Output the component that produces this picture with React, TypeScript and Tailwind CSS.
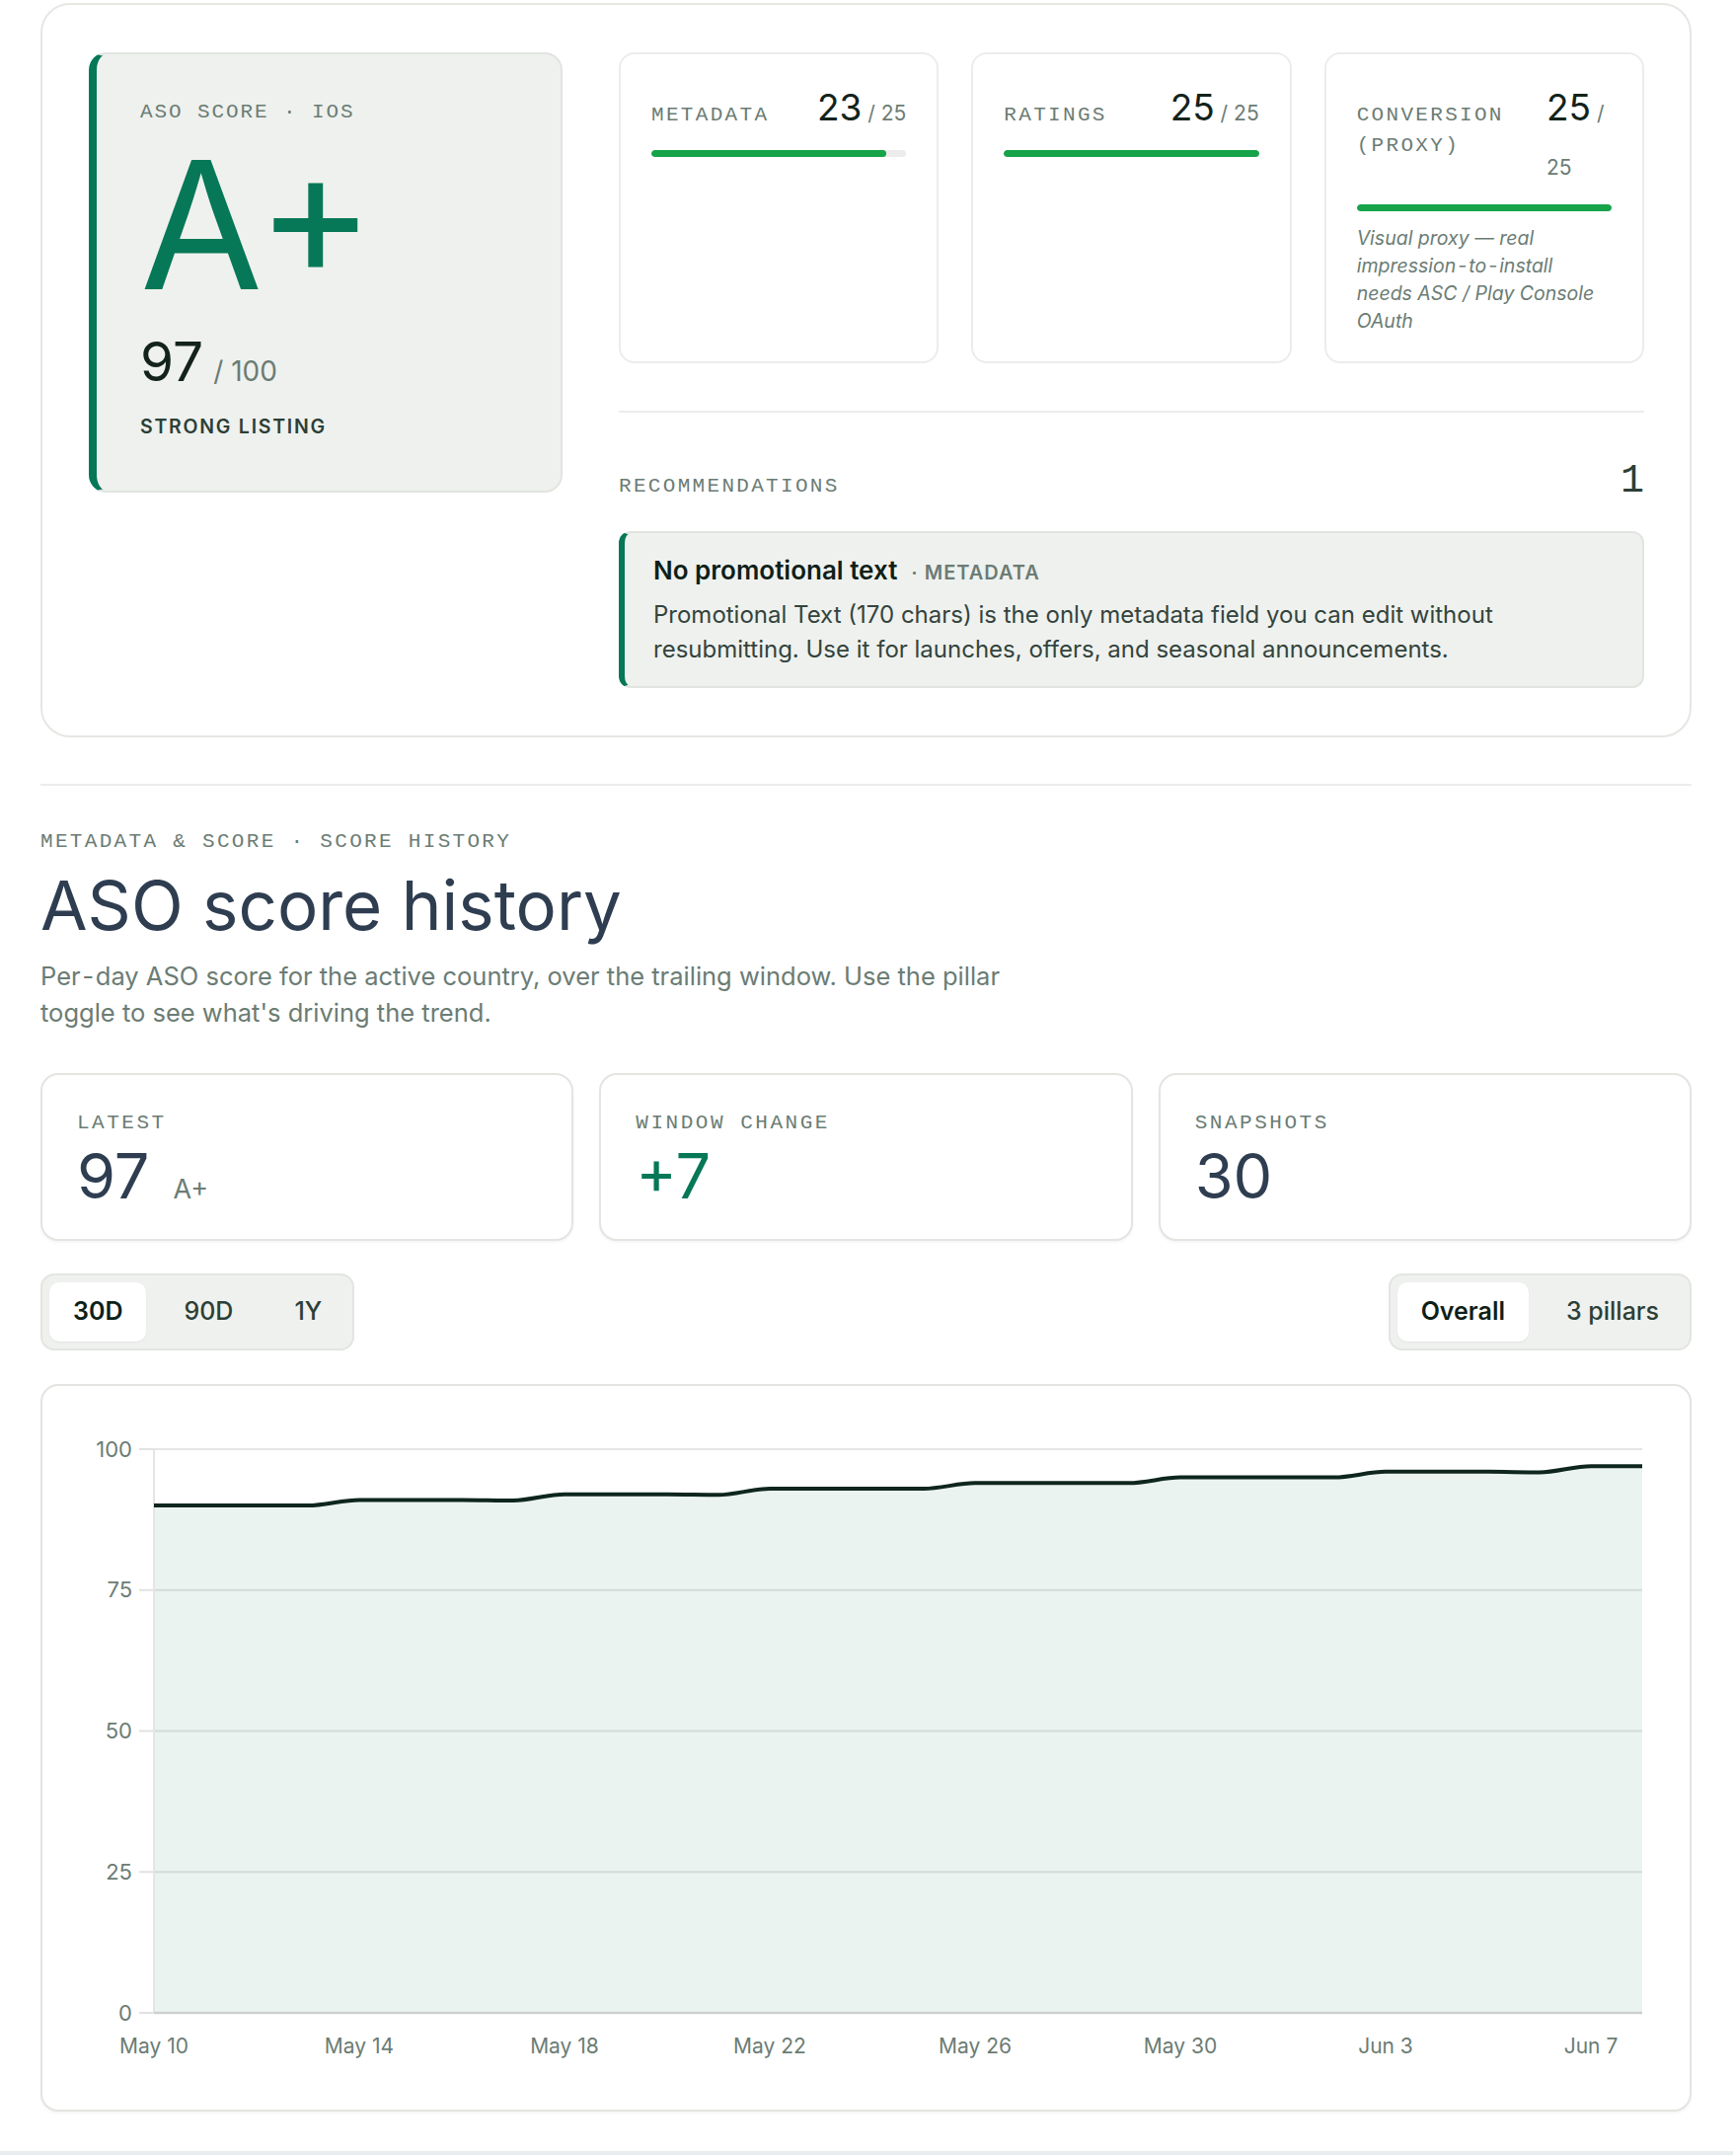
import React from 'react'

const MONO =
  "font-['Courier_New','Courier','Nimbus_Mono_PS','Nimbus_Mono_L','FreeMono','TeX_Gyre_Cursor','Liberation_Mono',monospace]"

const scores = [
  90, 90, 90, 90, 91, 91, 91, 90.9, 92, 92, 92, 91.9, 93, 93, 93, 93, 94, 94, 94, 94, 95, 95, 95, 95, 96, 96,
  96, 95.9, 97, 97,
]

const xLabels = ['May 10', 'May 14', 'May 18', 'May 22', 'May 26', 'May 30', 'Jun 3', 'Jun 7']

// non-breaking hyphen, set a little apart like the original render
const Nbh = () => <span className="mx-[3px]">‑</span>

// monotone-x cubic, same shape as d3/recharts "monotone"
function monotonePath(pts: [number, number][]) {
  const n = pts.length
  const s: number[] = []
  for (let i = 0; i < n - 1; i++) s.push((pts[i + 1][1] - pts[i][1]) / (pts[i + 1][0] - pts[i][0]))
  const t: number[] = new Array(n).fill(0)
  for (let i = 1; i < n - 1; i++) {
    const a = s[i - 1]
    const b = s[i]
    t[i] = (Math.sign(a) + Math.sign(b)) * Math.min(Math.abs(a), Math.abs(b), 0.5 * Math.abs((a + b) / 2))
  }
  t[0] = (3 * s[0] - t[1]) / 2
  t[n - 1] = (3 * s[n - 2] - t[n - 2]) / 2
  let d = `M${pts[0][0]},${pts[0][1]}`
  for (let i = 0; i < n - 1; i++) {
    const [x0, y0] = pts[i]
    const [x1, y1] = pts[i + 1]
    const h = (x1 - x0) / 3
    d += `C${x0 + h},${y0 + t[i] * h} ${x1 - h},${y1 - t[i + 1] * h} ${x1},${y1}`
  }
  return d
}

function PillarCard({
  label,
  score,
  max,
  narrow,
  note,
}: {
  label: string
  score: number
  max: number
  narrow?: boolean
  note?: React.ReactNode
}) {
  return (
    <div className="rounded-[16px] border-2 border-[#ececec] bg-white px-[31px] pt-[27px] pb-[27px]">
      <div className="flex items-baseline justify-between gap-[16px]">
        <span className={`${MONO} flex-1 text-[21px] leading-[31px] tracking-[0.11em] text-[#6b7c74] uppercase`}>
          {label}
        </span>
        {narrow ? (
          <span className="w-[66px] leading-[54px] text-[#13231c]">
            <span className="text-[37px]">{score}</span>
            <span className="text-[21px] text-[#6b7c74]"> /</span>
            <br />
            <span className="text-[21px] text-[#6b7c74]">{max}</span>
          </span>
        ) : (
          <span className="shrink-0 leading-[54px] text-[#13231c]">
            <span className="text-[37px]">{score}</span>
            <span className="text-[21px] text-[#6b7c74]"> / {max}</span>
          </span>
        )}
      </div>
      <div className="mt-[9px] h-[7px] w-full overflow-hidden rounded-full bg-[#ececec]">
        <div className="h-full rounded-full bg-[#16a34a]" style={{ width: `${(score / max) * 100}%` }} />
      </div>
      {note && <p className="mt-[13px] text-[19.5px] leading-[28px] text-[#6b7c74] italic">{note}</p>}
    </div>
  )
}

function ScoreOverview() {
  return (
    <section className="grid grid-cols-[480px_1fr] items-start gap-[57px] rounded-[30px] border-2 border-[#e6e7e3] pt-[48px] pr-[46px] pb-[48px] pl-[47px]">
      <div className="rounded-[18px] border-2 border-l-[8px] border-[#e2e4e0] border-l-[#067857] bg-[#eff1ee] pt-[44px] pb-[54px] pl-[44px]">
        <div className={`${MONO} text-[21px] leading-[30px] tracking-[0.09em] text-[#6b7c74]`}>ASO SCORE · IOS</div>
        <div className="mt-[9px] text-[180px] leading-none text-[#067857]">A+</div>
        <div className="mt-[21px] flex items-baseline gap-[10px] leading-none">
          <span className="text-[55px] text-[#13231c]">97</span>
          <span className="text-[28px] text-[#6b7c74]">/ 100</span>
        </div>
        <div className="mt-[29px] text-[19.5px] leading-none font-semibold tracking-[0.09em] text-[#2c3f37]">
          STRONG LISTING
        </div>
      </div>

      <div>
        <div className="grid grid-cols-3 gap-[33px]">
          <PillarCard label="Metadata" score={23} max={25} />
          <PillarCard label="Ratings" score={25} max={25} />
          <PillarCard
            label="Conversion (proxy)"
            score={25}
            max={25}
            narrow
            note={
              <>
                <span>Visual proxy — real</span>
                <br />
                <span>impression</span>
                <Nbh />
                <span>to</span>
                <Nbh />
                <span>install</span>
                <br />
                <span>needs ASC / Play Console</span>
                <br />
                <span>OAuth</span>
              </>
            }
          />
        </div>

        <div className="mt-[48px] border-t-2 border-[#ececec]" />

        <div className="mt-[50px] flex items-baseline justify-between">
          <span className={`${MONO} text-[21px] leading-[30px] tracking-[0.11em] text-[#6b7c74]`}>RECOMMENDATIONS</span>
          <span className={`${MONO} text-[40px] leading-none text-[#2c3f37]`}>1</span>
        </div>

        <div className="mt-[30px] rounded-[12px] border-2 border-l-[6px] border-[#e2e4e0] border-l-[#067857] bg-[#eff1ee] pt-[22px] pr-[30px] pb-[20px] pl-[29px]">
          <div className="mb-[9px] flex items-baseline leading-[32px]">
            <span className="text-[26px] font-semibold text-[#0f1f18]">No promotional text</span>
            <span className="ml-[14px] text-[20px] font-semibold tracking-[0.05em] text-[#6b7c74]">· METADATA</span>
          </div>
          <p className="text-[24px] leading-[35px] text-[#33443d]">
            Promotional Text (170 chars) is the only metadata field you can edit without
            <br />
            resubmitting. Use it for launches, offers, and seasonal announcements.
          </p>
        </div>
      </div>
    </section>
  )
}

function StatCard({ label, children }: { label: string; children: React.ReactNode }) {
  return (
    <div className="rounded-[18px] border-2 border-[#e3e5e1] bg-white px-[35px] pt-[34px] pb-[32px] shadow-[0_2px_3px_rgba(0,0,0,0.04)]">
      <div className={`${MONO} text-[21px] leading-[30px] tracking-[0.12em] text-[#6b7c74]`}>{label}</div>
      <div className="mt-[7px] flex items-baseline gap-[24px] leading-none">{children}</div>
    </div>
  )
}

function Segmented({ items, active }: { items: string[]; active: string }) {
  return (
    <div className="flex gap-[14px] rounded-[14px] border-2 border-[#e3e5e1] bg-[#eff1ee] p-[7px]">
      {items.map((it) => (
        <button
          key={it}
          className={`h-[60px] rounded-[10px] px-[24px] text-[25px] ${
            it === active
              ? 'bg-white font-semibold text-[#0f1f18] shadow-[0_1px_2px_rgba(0,0,0,0.06)]'
              : 'font-medium text-[#2c3f37]'
          }`}
        >
          {it}
        </button>
      ))}
    </div>
  )
}

function Chart() {
  const x0 = 113
  const step = 52
  const yOf = (v: number) => 635 - v * 5.71
  const pts = scores.map((v, i) => [x0 + i * step, yOf(v)] as [number, number])
  const line = monotonePath(pts)
  const area = `${line}L${pts[pts.length - 1][0]},635L${x0},635Z`
  const ticks = [100, 75, 50, 25, 0]

  return (
    <div className="mt-[34px] rounded-[18px] border-2 border-[#e3e5e1] bg-white shadow-[0_2px_3px_rgba(0,0,0,0.04)]">
      <svg viewBox="0 0 1669 733" className="block h-[733px] w-full">
        {ticks.map((t) => (
          <g key={t}>
            {t !== 0 && <line x1={x0} x2={1621} y1={yOf(t)} y2={yOf(t)} stroke="#e4e6e4" strokeWidth={2} />}
            <line x1={98} x2={x0} y1={yOf(t)} y2={yOf(t)} stroke="#e0e3e1" strokeWidth={2} />
            <text
              x={91}
              y={yOf(t) + 7.5}
              textAnchor="end"
              fontSize={22}
              fill="#6b7c74"
              fontFamily="Inter, sans-serif"
            >
              {t}
            </text>
          </g>
        ))}
        <path d={area} fill="#1f7a62" fillOpacity={0.09} />
        <line x1={x0} x2={x0} y1={yOf(100)} y2={635} stroke="#e4e6e4" strokeWidth={2} />
        <line x1={x0} x2={1621} y1={635} y2={635} stroke="#cbd1cf" strokeWidth={2.5} />
        <path d={line} fill="none" stroke="#0e261e" strokeWidth={4} strokeLinejoin="round" />
        {xLabels.map((l, i) => (
          <text
            key={l}
            x={x0 + i * 4 * step}
            y={676}
            textAnchor="middle"
            fontSize={21}
            fill="#6b7c74"
            fontFamily="Inter, sans-serif"
          >
            {l}
          </text>
        ))}
      </svg>
    </div>
  )
}

export default function App() {
  return (
    <div className="min-h-[2184px] bg-white font-['Inter',sans-serif] text-[#13231c]">
      <div className="pt-[3px] pr-[42px] pl-[41px]">
        <ScoreOverview />

        <div className="mt-[47px] border-t-2 border-[#ececec]" />

        <div className={`${MONO} mt-[42px] text-[21px] leading-[30px] tracking-[0.11em] text-[#6b7c74]`}>
          METADATA &amp; SCORE · SCORE HISTORY
        </div>
        <h1 className="mt-[12px] text-[69px] leading-[1.1] font-normal text-[#2f3d51]">ASO score history</h1>
        <p className="mt-[14px] text-[25.5px] leading-[37px] text-[#6b7c74]">
          <span>Per</span>
          <Nbh />
          <span>day ASO score for the active country, over the trailing window. Use the pillar</span>
          <br />
          <span>toggle to see what's driving the trend.</span>
        </p>

        <div className="mt-[43px] grid grid-cols-3 gap-[26px]">
          <StatCard label="LATEST">
            <span className="text-[63px] text-[#2f3d51]">97</span>
            <span className="text-[27px] text-[#6b7c74]">A+</span>
          </StatCard>
          <StatCard label="WINDOW CHANGE">
            <span className="text-[63px] text-[#067857]">+7</span>
          </StatCard>
          <StatCard label="SNAPSHOTS">
            <span className="text-[63px] text-[#2f3d51]">30</span>
          </StatCard>
        </div>

        <div className="mt-[33px] flex items-center justify-between">
          <Segmented items={['30D', '90D', '1Y']} active="30D" />
          <Segmented items={['Overall', '3 pillars']} active="Overall" />
        </div>

        <Chart />
      </div>
      <div className="mt-[40px] h-[4px] bg-[#e8edf0]" />
    </div>
  )
}
